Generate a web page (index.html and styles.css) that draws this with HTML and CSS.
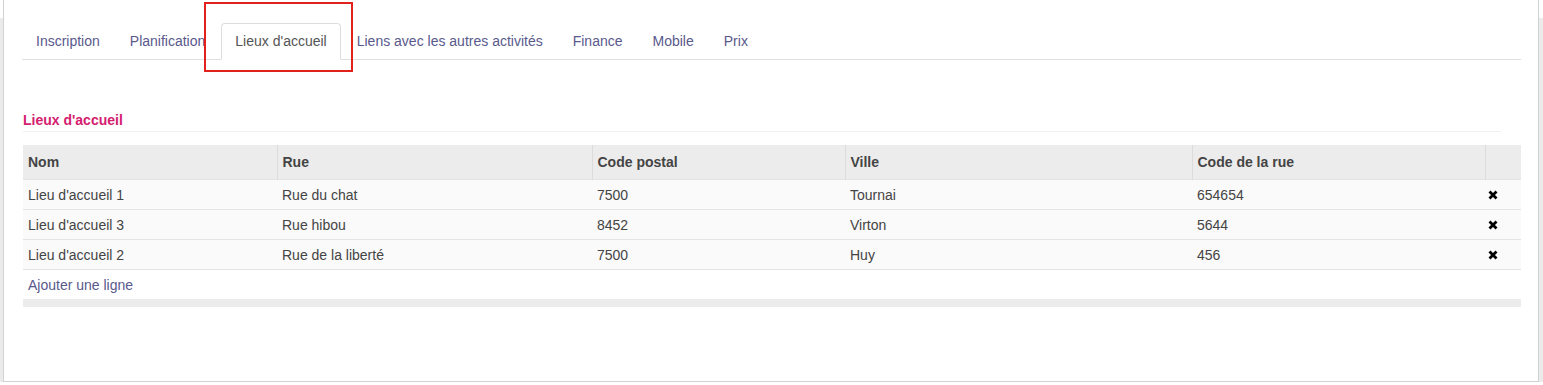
FILE: index.html
```html
<!DOCTYPE html>
<html lang="fr">
<head>
  <meta charset="UTF-8" />
  <meta name="viewport" content="width=device-width, initial-scale=1.0" />
  <title>Activité - Lieux d'accueil</title>
  <link rel="stylesheet" href="styles.css">
</head>

<body>
  <div class="panel">
    <ul class="tabs">
      <li><a href="#">Inscription</a></li>
      <li><a href="#">Planification</a></li>
      <li class="active"><a href="#">Lieux d'accueil</a></li>
      <li><a href="#">Liens avec les autres activités</a></li>
      <li><a href="#">Finance</a></li>
      <li><a href="#">Mobile</a></li>
      <li><a href="#">Prix</a></li>
    </ul>

    <h4 class="section-title">Lieux d'accueil</h4>

    <table class="grid">
      <colgroup>
        <col style="width: 254px">
        <col style="width: 315px">
        <col style="width: 253px">
        <col style="width: 347px">
        <col style="width: 293px">
        <col>
      </colgroup>
      <thead>
        <tr>
          <th>Nom</th>
          <th>Rue</th>
          <th>Code postal</th>
          <th>Ville</th>
          <th>Code de la rue</th>
          <th></th>
        </tr>
      </thead>
      <tbody>
        <tr>
          <td>Lieu d'accueil 1</td>
          <td>Rue du chat</td>
          <td>7500</td>
          <td>Tournai</td>
          <td>654654</td>
          <td class="remove"><svg width="10" height="10" viewBox="0 0 10 10"><path d="M1.5 1.5 L8.5 8.5 M8.5 1.5 L1.5 8.5" stroke="#000" stroke-width="2.8" /></svg></td>
        </tr>
        <tr>
          <td>Lieu d'accueil 3</td>
          <td>Rue hibou</td>
          <td>8452</td>
          <td>Virton</td>
          <td>5644</td>
          <td class="remove"><svg width="10" height="10" viewBox="0 0 10 10"><path d="M1.5 1.5 L8.5 8.5 M8.5 1.5 L1.5 8.5" stroke="#000" stroke-width="2.8" /></svg></td>
        </tr>
        <tr>
          <td>Lieu d'accueil 2</td>
          <td>Rue de la liberté</td>
          <td>7500</td>
          <td>Huy</td>
          <td>456</td>
          <td class="remove"><svg width="10" height="10" viewBox="0 0 10 10"><path d="M1.5 1.5 L8.5 8.5 M8.5 1.5 L1.5 8.5" stroke="#000" stroke-width="2.8" /></svg></td>
        </tr>
        <tr class="add-row">
          <td colspan="6"><a href="#">Ajouter une ligne</a></td>
        </tr>
        <tr class="foot-row">
          <td colspan="6"></td>
        </tr>
      </tbody>
    </table>

    <div class="highlight"></div>
  </div>
</body>
</html>
```

FILE: styles.css
```css
/* Root Variables */
:root {
  --link: #59598c;
  --text: #444;
  --accent: #d4206f;
  --line: #e4e4e4;
  --head-bg: #ececec;
  --row-bg: #fafafa;
}

/* Body */
body {
  margin: 0;
  font-family: "Liberation Sans", Arial, sans-serif;
  font-size: 14px;
  color: var(--text);
  background: linear-gradient(#fff 18px, #ebebeb 18px);
}

/* Panel */
.panel {
  position: relative;
  height: 382px;
  box-sizing: border-box;
  margin: 0 4px 0 3px;
  padding: 23px 17px 0 18px;
  background: #fff;
  border: 1px solid #d2d2d2;
  border-top: none;
}

/* Tabs */
.tabs {
  list-style: none;
  margin: 0;
  padding: 0;
  display: flex;
  border-bottom: 1px solid #e0e0e0;
}

.tabs li {
  margin-right: 2px;
  margin-bottom: -1px;
}

.tabs a {
  display: block;
  padding: 9px 13px 10px;
  line-height: 16px;
  color: var(--link);
  text-decoration: none;
  border: 1px solid transparent;
  border-radius: 4px 4px 0 0;
}

.tabs .active a {
  color: #555;
  background: #fff;
  border-color: #ddd;
  border-bottom-color: #fff;
}

/* Section title */
.section-title {
  margin: 50px 20px 0 1px;
  padding-bottom: 1px;
  font-size: 14px;
  line-height: 20px;
  font-weight: bold;
  color: var(--accent);
  border-bottom: 1px solid #f0f0f0;
}

/* Table */
.grid {
  width: calc(100% - 1px);
  margin: 13px 0 0 1px;
  border-collapse: collapse;
  table-layout: fixed;
}

.grid th {
  height: 34px;
  padding: 0 5px;
  text-align: left;
  font-weight: bold;
  color: var(--text);
  background: var(--head-bg);
  border-left: 1px solid #dcdcdc;
}

.grid th:first-child {
  border-left: none;
}

.grid td {
  height: 29px;
  padding: 0 5px;
  background: var(--row-bg);
  border-top: 1px solid var(--line);
}

.grid .remove {
  padding-left: 3px;
}

.grid .remove svg {
  display: block;
}

.add-row td {
  background: #fff;
}

.add-row a {
  color: var(--link);
  text-decoration: none;
}

.foot-row td {
  height: 8px;
  padding: 0;
  border-top: none;
  background: var(--head-bg);
}

/* Annotation box */
.highlight {
  position: absolute;
  left: 200px;
  top: 2px;
  width: 145px;
  height: 66px;
  border: 2px solid #e2201c;
}
```
